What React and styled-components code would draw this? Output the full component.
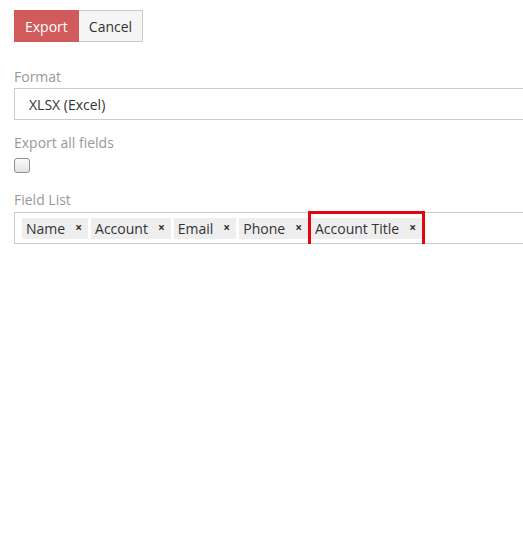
import styled, { createGlobalStyle } from "styled-components";

const GlobalStyle = createGlobalStyle`
  html, body {
    margin: 0;
    padding: 0;
    background: #fff;
    overflow: hidden;
  }
  body {
    font-family: "Open Sans", "Liberation Sans", sans-serif;
    font-size: 14px;
    color: #333;
  }
`;

const Page = styled.div`
  padding: 10px 0 0 14px;
  width: 600px;
`;

const Toolbar = styled.div`
  display: flex;
`;

const Button = styled.button`
  height: 32px;
  padding: 0 10px;
  font-family: inherit;
  font-size: 14px;
  border: 1px solid ${(p) => (p.primary ? "#d15b5b" : "#ccc")};
  background: ${(p) => (p.primary ? "#d15b5b" : "#f5f5f5")};
  color: ${(p) => (p.primary ? "#fff" : "#333")};
  border-radius: 0;
  cursor: pointer;
  & + & {
    border-left: none;
  }
`;

const Field = styled.div`
  margin-top: ${(p) => p.gap}px;
`;

const Label = styled.div`
  height: 20px;
  line-height: 20px;
  color: #999;
  margin-bottom: ${(p) => p.space || 1}px;
`;

const SelectBox = styled.div`
  height: 32px;
  box-sizing: border-box;
  border: 1px solid #ccc;
  padding: 0 14px;
  display: flex;
  align-items: center;
  color: #333;
`;

const Check = styled.input.attrs({ type: "checkbox" })`
  appearance: none;
  display: block;
  margin: 0;
  width: 16px;
  height: 15px;
  box-sizing: border-box;
  border: 1px solid #8f8f8f;
  border-radius: 3px;
  background: linear-gradient(#fbfbfb, #e4e4e4);
`;

const TagBox = styled.div`
  height: 32px;
  box-sizing: border-box;
  border: 1px solid #ccc;
  padding: 0 7px;
  display: flex;
  align-items: center;
  gap: 3px;
`;

const Tag = styled.span`
  position: relative;
  display: inline-flex;
  align-items: center;
  height: 21px;
  padding: 0 6px 0 4px;
  background: #eee;
  color: #333;
  white-space: nowrap;
  ${(p) =>
    p.marked &&
    `
    &::after {
      content: "";
      position: absolute;
      left: -3px;
      right: -3px;
      top: -7px;
      bottom: -9px;
      border: 3px solid #e8040c;
      pointer-events: none;
    }
  `}
`;

const Remove = styled.span`
  margin-left: 10px;
  font-size: 12px;
  font-weight: 700;
  color: #333;
  line-height: 1;
`;

const fields = ["Name", "Account", "Email", "Phone", "Account Title"];

export default function App() {
  return (
    <Page>
      <GlobalStyle />
      <Toolbar>
        <Button primary>Export</Button>
        <Button>Cancel</Button>
      </Toolbar>
      <Field gap={25}>
        <Label>Format</Label>
        <SelectBox>XLSX (Excel)</SelectBox>
      </Field>
      <Field gap={13}>
        <Label space={5}>Export all fields</Label>
        <Check />
      </Field>
      <Field gap={17}>
        <Label space={2}>Field List</Label>
        <TagBox>
          {fields.map((f, i) => (
            <Tag key={f} marked={i === fields.length - 1}>
              {f}
              <Remove>×</Remove>
            </Tag>
          ))}
        </TagBox>
      </Field>
    </Page>
  );
}
